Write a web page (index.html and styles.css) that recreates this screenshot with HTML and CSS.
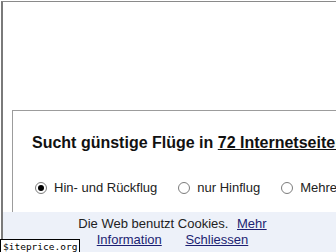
FILE: index.html
```html
<!DOCTYPE html>
<html lang="de">
  <head>
    <meta charset="UTF-8" />
    <meta name="viewport" content="width=device-width, initial-scale=1.0" />
    <title>Flugsuche</title>
    <link rel="stylesheet" href="styles.css">
  </head>
  <body>
    <div class="frame">
      <div class="search-box">
        <h1 class="title">Sucht günstige Flüge in <a href="#">72 Internetseiten</a></h1>
        <form class="trip-types">
          <label class="trip">
            <input type="radio" name="trip" value="return" checked />
            <span>Hin- und Rückflug</span>
          </label>
          <label class="trip">
            <input type="radio" name="trip" value="oneway" />
            <span>nur Hinflug</span>
          </label>
          <label class="trip">
            <input type="radio" name="trip" value="multi" />
            <span>Mehrere Ziele</span>
          </label>
        </form>
      </div>
    </div>

    <div class="cookie-bar">
      <p class="cookie-text">
        Die Web benutzt Cookies.
        <a href="#" class="more">Mehr Information</a>
        <a href="#" class="close">Schliessen</a>
      </p>
    </div>

    <div class="watermark">$iteprice.org</div>
  </body>
</html>
```

FILE: styles.css
```css
html,
body {
  height: 100%;
}

body {
  margin: 0;
  overflow: hidden;
  font-family: "Liberation Sans", Arial, sans-serif;
  color: #111;
  background-color: #fff;
}

.frame {
  height: 100%;
  margin: 1px 0 0 1px;
  border-top: 1px solid #8a8a8a;
  border-left: 2px solid #7a7a7a;
  overflow: hidden;
}

.search-box {
  width: 420px;
  height: 200px;
  margin: 108px 0 0 9px;
  padding-left: 19px;
  border-top: 1px solid #9c9c9c;
  border-left: 1px solid #9c9c9c;
}

.title {
  margin: 0;
  padding-top: 22px;
  font-size: 16px;
  line-height: 20px;
  font-weight: bold;
  white-space: nowrap;
}

.title a {
  color: #111;
  text-decoration: underline;
}

.trip-types {
  display: flex;
  gap: 21px;
  margin: 27px 0 0 3px;
  font-size: 13px;
  line-height: 16px;
  white-space: nowrap;
}

.trip {
  display: flex;
  align-items: center;
  gap: 7px;
  color: #222;
}

.trip input[type="radio"] {
  -webkit-appearance: none;
  appearance: none;
  width: 12px;
  height: 12px;
  margin: 0;
  border: 1px solid #7c7c7c;
  border-radius: 50%;
  background-color: #fff;
  display: grid;
  place-items: center;
}

.trip input[type="radio"]:checked::before {
  content: "";
  width: 6px;
  height: 6px;
  border-radius: 50%;
  background-color: #000;
}

/* cookie notice sits over the page bottom */

.cookie-bar {
  position: fixed;
  left: 3px;
  right: 0;
  bottom: 0;
  height: 40px;
  padding: 4px 0 0 6px;
  box-sizing: border-box;
  background-color: #edf1f9;
}

.cookie-text {
  width: 210px;
  margin: 0 auto;
  font-size: 13px;
  line-height: 16px;
  text-align: center;
  color: #222;
}

.cookie-text a {
  color: #1c1f72;
  text-decoration: underline;
}

.cookie-text .more {
  margin-left: 5px;
}

.cookie-text .close {
  margin-left: 20px;
}

.watermark {
  position: fixed;
  left: 0;
  bottom: -2px;
  padding: 0 2px;
  border: 1px solid #000;
  background-color: #fff;
  font-family: "DejaVu Sans Mono", monospace;
  font-size: 9.5px;
  line-height: 13px;
  color: #000;
}
```
